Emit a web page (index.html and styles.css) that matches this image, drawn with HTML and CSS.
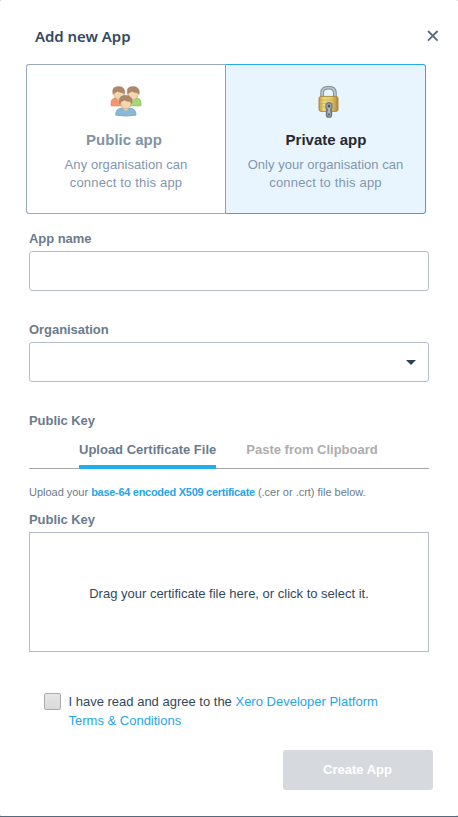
FILE: index.html
```html
<!DOCTYPE html>
<html lang="en">
<head>
<meta charset="utf-8">
<title>Add new App</title>
<link rel="stylesheet" href="styles.css">
</head>
<body>
<main class="modal">
  <header class="header">
    <h1 class="title">Add new App</h1>
    <button class="close" aria-label="Close">
      <svg width="12" height="12" viewBox="0 0 12 12"><path d="M1 1L10.6 10.6M10.6 1L1 10.6" stroke="#5b6e80" stroke-width="1.9" fill="none"/></svg>
    </button>
  </header>

  <div class="types">
    <div class="type type-public">
      <svg class="type-icon" width="34" height="34" viewBox="0 0 34 34">
        <defs>
          <g id="person">
            <path d="M-7.6 12.8V9.5Q-7.6 5.5-3.2 5L0 7L3.2 5Q7.6 5.5 7.6 9.5V12.8Z" stroke-width="1"/>
            <path d="M-2.4 3V5.4L0 8L2.4 5.4V3Z" fill="#eccba3" stroke="none"/>
            <ellipse cx="0" cy="1" rx="4.9" ry="5.4" fill="#f3d5b0" stroke="#c6a179" stroke-width=".6"/>
            <path d="M-5.8 1.5Q-7.4-5.6-2.2-6.3Q2.8-7.4 5 -4.2Q6.8-2 5.8 1.5L4.3-.2Q1 -.4-1.4-1.8Q-3-.6-4.4-.2Z" fill="#ad8768" stroke="#987458" stroke-width=".4"/>
          </g>
        </defs>
        <use href="#person" x="9.8" y="9" fill="#f7956b" stroke="#e58a63"/>
        <use href="#person" x="24.3" y="9" fill="#a5d878" stroke="#8fc36c"/>
        <g transform="translate(16.8 17.8) scale(1.04)"><path d="M-9.8 12.8Q-9.9 6.6-4 6L0 7.8L4 6Q9.9 6.6 9.8 12.8Q0 14.6-9.8 12.8Z" fill="#89b9d6" stroke="#75a5c1" stroke-width=".8"/><path d="M-2.7 3V6.4L0 9L2.7 6.4V3Z" fill="#eccba3"/><ellipse cx="0" cy="1.2" rx="5" ry="5.5" fill="#f3d5b0" stroke="#c6a179" stroke-width=".6"/><path d="M-5.8 1.8Q-7.4-5.2-2.2-6Q2.8-7 5 -4Q6.8-2 5.8 1.8L4.3-.2Q1 -.4-1.4-1.8Q-3-.6-4.4-.2Z" fill="#ad8768" stroke="#987458" stroke-width=".4"/></g>
      </svg>
      <h2 class="type-name">Public app</h2>
      <p class="type-text"><span class="t-any">Any organisation can</span><br><span class="t-conn">connect to this app</span></p>
    </div>
    <div class="type type-private">
      <svg class="type-icon" width="34" height="34" viewBox="0 0 34 34">
        <defs><linearGradient id="gold" x1="0" x2="1" y1="0" y2="0"><stop offset="0" stop-color="#bd983f"/><stop offset=".25" stop-color="#ebda7c"/><stop offset=".65" stop-color="#e2c767"/><stop offset="1" stop-color="#b18735"/></linearGradient></defs>
        <path d="M11.1 13V9Q11.1 3.7 17.5 3.7T23.9 9V13" fill="none" stroke="#858f99" stroke-width="3.8"/>
        <path d="M11.1 13V9Q11.1 3.7 17.5 3.7T23.9 9V13" fill="none" stroke="#bcc4cb" stroke-width="1.8"/>
        <rect x="8" y="12.4" width="19" height="15" rx="2" fill="url(#gold)" stroke="#a88437" stroke-width=".9"/>
        <path d="M10 16H25M10 19.5H25M10 23H25" stroke="#c9aa48" stroke-width=".6"/>
        <rect x="15" y="18.6" width="6" height="7.8" rx="3" fill="#979da4" stroke="#747a82" stroke-width="1.2"/>
        <rect x="17" y="20.8" width="2" height="2.6" rx="1" fill="#484e54"/>
        <rect x="15.4" y="25.8" width="5.2" height="7.4" rx="2.3" fill="#949aa0" stroke="#70777f" stroke-width="1.2"/>
        <path d="M18 24V29.5" stroke="#b5bcc2" stroke-width="1.8"/>
        <path d="M18 29.5V31" stroke="#50565c" stroke-width="1.5"/>
      </svg>
      <h2 class="type-name">Private app</h2>
      <p class="type-text"><span class="t-only">Only your organisation can</span><br><span class="t-conn">connect to this app</span></p>
    </div>
  </div>

  <form class="form">
    <label class="label" for="name">App name</label>
    <input class="field" id="name" type="text">
    <div class="label">Organisation</div>
    <div class="field select"><svg width="10" height="5" viewBox="0 0 10 5"><path d="M0 0H10L5 5Z" fill="#2c4056"/></svg></div>
    <div class="label label-tabs">Public Key</div>
    <nav class="tabs">
      <span class="tab tab-active">Upload Certificate File</span>
      <span class="tab">Paste from Clipboard</span>
    </nav>
    <p class="hint">Upload your <a>base-64 encoded X509 certificate</a> (.cer or .crt) file below.</p>
    <div class="label label-drop">Public Key</div>
    <div class="drop"><span>Drag your certificate file here, or click to select it.</span></div>
    <div class="agree">
      <span class="check"></span>
      <p class="agree-text"><span>I have read and agree to the <a>Xero Developer Platform</a></span><br><a>Terms &amp; Conditions</a></p>
    </div>
    <div class="actions"><button class="create" type="button">Create App</button></div>
  </form>
</main>
</body>
</html>
```
FILE: styles.css
```css
* { box-sizing: border-box; }
body {
  margin: 0;
  background: #566a7d;
  color: #34485d;
  font: 13px/19px "Liberation Sans", Arial, sans-serif;
}
h1, h2, p { margin: 0; }
a { color: #27a5e9; }
.modal {
  height: 816px;
  background: #fff;
  border-radius: 1px;
  overflow: hidden;
}
.header {
  display: flex;
  justify-content: space-between;
  height: 64px;
  padding: 26px 19px 0 35px;
}
.title {
  color: #344a5f;
  font: 600 15px/21px "Noto Sans", "Open Sans", sans-serif;
  letter-spacing: -.05px;
}
.close {
  width: 12px;
  height: 12px;
  margin-top: 4px;
  padding: 0;
  border: 0;
  background: none;
}
.close svg { display: block; }
.types {
  display: flex;
  width: 400px;
  height: 150px;
  margin-left: 26px;
}
.type {
  padding-top: 19px;
  border: 1px solid #9aaaba;
  text-align: center;
}
.type-public {
  width: 199px;
  border-right: 0;
  border-radius: 3px 0 0 3px;
  padding-right: 4px;
}
.type-private {
  width: 201px;
  border-color: #27a8ec;
  border-left-color: #7fa5bf;
  border-radius: 0 3px 3px 0;
  background: #e8f5fe;
}
.type-icon { display: block; margin: 0 auto; }
.type-public .type-icon { margin-left: 82px; }
.type-private .type-icon { margin-left: 85px; }
.type-name {
  margin: 12px 0 6px;
  color: #8293a5;
  font-size: 15px;
  line-height: 20px;
}
.type-private .type-name { padding-left: 1px; color: #29292f; }
.type-public .type-text { padding-left: 4px; }
.type-text {
  color: #8296ae;
  line-height: 18px;
}
.t-any { letter-spacing: .07px; }
.t-only { letter-spacing: .04px; }
.t-conn { letter-spacing: .18px; }
.form { padding: 15px 29px 0; }
.label {
  display: block;
  height: 22px;
  color: #6b7b8b;
  font-weight: bold;
  line-height: 20px;
  letter-spacing: -.05px;
}
.field {
  display: flex;
  width: 400px;
  height: 40px;
  margin-bottom: 29px;
  border: 1px solid #b6bdc8;
  border-radius: 3px;
  background: #fff;
}
.select {
  align-items: center;
  justify-content: flex-end;
  padding-right: 12px;
}
.label-tabs { height: 19px; }
.tabs {
  display: flex;
  gap: 30px;
  height: 39px;
  padding-left: 50px;
  border-bottom: 1px solid #a5a9ad;
  color: #adadad;
  font-weight: bold;
}
.tab { height: 39px; line-height: 40px; }
.tab-active { border-bottom: 4px solid #1fb1e6; color: #6b7b8b; }
.hint {
  margin-top: 14px;
  color: #6b7b8b;
  font-size: 11px;
  line-height: 18px;
  letter-spacing: -.02px;
  white-space: nowrap;
}
.hint a { font-weight: bold; letter-spacing: -.29px; }
.label-drop { height: 22px; margin-top: 9px; }
.drop {
  display: flex;
  align-items: center;
  justify-content: center;
  height: 120px;
  padding-top: 3px;
  border: 1px solid #b6bdc8;
}
.agree {
  display: flex;
  gap: 7.5px;
  margin: 40px 0 0 15px;
}
.check {
  width: 17px;
  height: 17px;
  margin-top: 1px;
  border: 1px solid #aaa;
  border-radius: 2px;
  background: linear-gradient(#e6e6e6, #d9d9d9);
}
.agree-text { white-space: nowrap; }
.actions {
  display: flex;
  justify-content: flex-end;
  margin: 20px -4px 0 0;
}
.create {
  width: 150px;
  height: 40px;
  padding: 0 1px 2px 0;
  border: 0;
  border-radius: 3px;
  background: #d6dade;
  color: #fff;
  font: bold 13px "Liberation Sans", Arial, sans-serif;
}
```
